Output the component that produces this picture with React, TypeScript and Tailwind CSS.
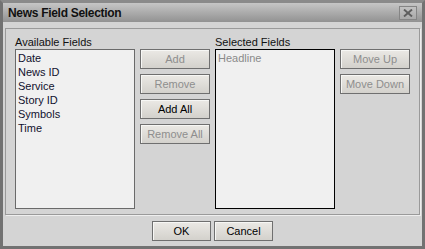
const font = { fontFamily: '"Liberation Sans", Arial, sans-serif' };

function Btn({ label, disabled, w = "w-[70px]" }: { label: string; disabled?: boolean; w?: string }) {
  return (
    <button
      type="button"
      className={`${w} h-[20px] border border-[#6f6f6f] bg-gradient-to-b from-[#ebe9e5] to-[#d3d1cc] text-[11px] leading-none shadow-[inset_1px_1px_0_#f7f7f5] ${
        disabled ? "text-[#8e8e8e]" : "text-black"
      }`}
    >
      {label}
    </button>
  );
}

function ListBox({ items, muted, focused }: { items: string[]; muted?: boolean; focused?: boolean }) {
  return (
    <div
      className={`h-[160px] w-[120px] border bg-[#f0f0f0] px-[2px] pt-[1px] ${
        focused ? "border-black" : "border-[#6a6a6a]"
      }`}
    >
      {items.map((it) => (
        <div key={it} className={`h-[14px] text-[11px] leading-[14px] ${muted ? "text-[#8a8a8a]" : "text-[#10102e]"}`}>
          {it}
        </div>
      ))}
    </div>
  );
}

export default function App() {
  return (
    <div style={font} className="flex h-[249px] w-[425px] flex-col border-[3px] border-[#727272] bg-[#d4d4d4] border-t-[#8a8a8a]">
      <div className="flex h-[19px] shrink-0 items-center justify-between bg-gradient-to-b from-[#c6c6c6] to-[#929292] pl-[5px] pr-[5px]">
        <span className="text-[12px] font-bold tracking-[-0.3px] text-[#111]">News Field Selection</span>
        <div className="flex h-[14px] w-[18px] items-center justify-center border border-[#858585] bg-gradient-to-b from-[#c2c2c2] to-[#a9a9a9]">
          <svg width="10" height="8" viewBox="0 0 10 8">
            <path d="M1 0.5 L9 7.5 M9 0.5 L1 7.5" stroke="#5e5e5e" strokeWidth="1.9" />
          </svg>
        </div>
      </div>

      <div className="mx-[2px] mt-[6px] flex h-[187px] gap-[5px] border border-[#9a9a9a] px-[9px] pt-[7px] shadow-[1px_1px_0_#eeeeee]">
        <div className="flex flex-col">
          <div className="h-[13px] text-[11px] leading-[13px] text-[#111]">Available Fields</div>
          <ListBox items={["Date", "News ID", "Service", "Story ID", "Symbols", "Time"]} />
        </div>
        <div className="flex flex-col gap-[5px] pt-[13px]">
          <Btn label="Add" disabled />
          <Btn label="Remove" disabled />
          <Btn label="Add All" />
          <Btn label="Remove All" disabled />
        </div>
        <div className="flex flex-col">
          <div className="h-[13px] text-[11px] leading-[13px] text-[#111]">Selected Fields</div>
          <ListBox items={["Headline"]} muted focused />
        </div>
        <div className="flex flex-col gap-[5px] pt-[13px]">
          <Btn label="Move Up" disabled />
          <Btn label="Move Down" disabled />
        </div>
      </div>

      <div className="mt-[6px] flex justify-center gap-[3px]">
        <Btn label="OK" w="w-[59px]" />
        <Btn label="Cancel" w="w-[59px]" />
      </div>
    </div>
  );
}
